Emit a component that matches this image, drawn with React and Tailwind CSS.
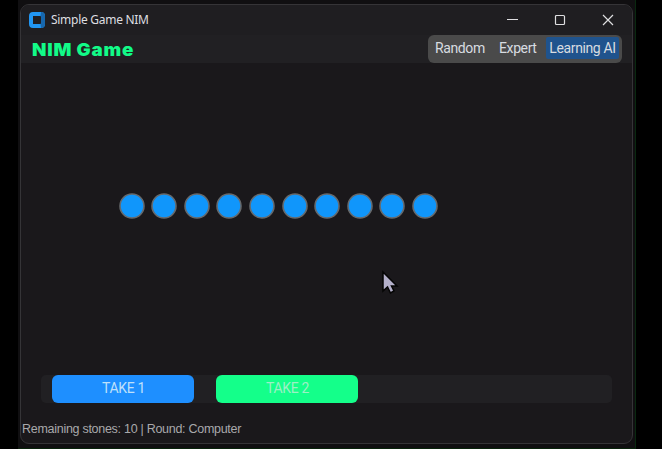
import React from 'react';

const STONES = 10;

function AppIcon() {
  return (
    <svg className="h-4 w-4 shrink-0" viewBox="0 0 16 16">
      <rect x="2" y="2" width="12" height="12" rx="2" fill="none" stroke="#2196f3" strokeWidth="4" />
      <path d="M12 0Q16 0 16 4V12Q16 16 12 16L11.5 12L12 11V5L11.5 4Z" fill="#1767ad" />
    </svg>
  );
}

function TitleBar() {
  return (
    <div className="flex h-[30px] items-center bg-[#1f1e21] pl-[8px]">
      <AppIcon />
      <span className="ml-[6px] whitespace-nowrap font-['Noto_Sans',sans-serif] text-[12px] leading-[18px] tracking-[-0.28px] text-[#dedee0]">
        Simple Game NIM
      </span>
      <div className="ml-auto mr-[18px] flex items-center gap-[36px] text-[#dedee0]">
        <svg className="h-3 w-3" viewBox="0 0 12 12" stroke="currentColor" fill="none"><path d="M1 5.5H12" /></svg>
        <svg className="h-3 w-3" viewBox="0 0 12 12" stroke="currentColor" strokeWidth="1.2" fill="none"><rect x="1.5" y="1.5" width="9" height="9" rx="1" /></svg>
        <svg className="h-3 w-3" viewBox="0 0 12 12" stroke="currentColor" strokeWidth="1.2" fill="none"><path d="M1 1L11 11M11 1L1 11" /></svg>
      </div>
    </div>
  );
}

function Header() {
  return (
    <div className="flex h-7 items-center bg-[#212023] pl-[11px] pr-[10px]">
      <h1 className="origin-left scale-x-[1.04] whitespace-nowrap pt-px font-['Inter',sans-serif] text-[18px] leading-7 font-black tracking-[0.75px] text-[#12fb88]">
        NIM Game
      </h1>
      <div className="ml-auto flex h-7 w-[194px] items-center rounded-[6px] bg-[#4a4a4a] pl-[7px] pr-[3px] pb-[2px] font-['Roboto',sans-serif] text-[14px] leading-[22px] tracking-[-0.38px] text-[#d8dce0]">
        <span className="w-[64px] whitespace-nowrap">Random</span>
        <span className="w-[47px] whitespace-nowrap">Expert</span>
        <span className="flex h-[22px] w-[73px] items-center justify-center whitespace-nowrap rounded-[2px] bg-[#1f538d]">Learning AI</span>
      </div>
    </div>
  );
}

export default function App() {
  return (
    <div className="flex h-[449px] w-[662px] overflow-hidden bg-black pl-[18px]">
      <div className="h-[449px] w-[618px] border-b border-r border-b-[#09230b] border-r-[#09280f] bg-[#100f11] pl-[2px] pt-[4px]">
        <div className="flex h-[440px] w-[613px] flex-col overflow-hidden rounded-[9px] border border-[#353437] bg-[#1a181b]">
          <TitleBar />
          <Header />
          <div className="flex h-[312px] gap-[6.6px] pl-[97.6px] pt-[130.4px]">
            {Array.from({ length: STONES }, (_, i) => (
              <svg key={i} className="h-[26px] w-[26px] shrink-0" viewBox="0 0 26 26">
                <circle cx="13" cy="13" r="12" fill="#1096fb" stroke="#66696c" strokeWidth="1.6" />
              </svg>
            ))}
          </div>
          <div className="ml-[20px] flex h-7 w-[571px] gap-[22px] rounded-[5px] bg-[#212023] pl-[11px] font-['Roboto',sans-serif] text-[14px] leading-[26px] tracking-[-0.3px]">
            <button className="h-7 w-[142px] rounded-[6px] bg-[#1e8fff] pb-[2px] pl-px text-[#bfe0fa]">TAKE 1</button>
            <button className="h-7 w-[142px] rounded-[6px] bg-[#14ff8a] pb-[2px] pl-px text-[#9cf0c6]">TAKE 2</button>
          </div>
          <p className="mt-[17px] whitespace-nowrap pl-px font-['Liberation_Sans',sans-serif] text-[12.5px] leading-[18px] tracking-[-0.28px] text-[#a9a9ab]">
            Remaining stones: 10 | Round: Computer
          </p>
        </div>
      </div>
      <svg className="absolute left-[381px] top-[269px] h-[26px] w-[18px]" viewBox="0 0 18 26">
        <path d="M2 3V22L6.5 18L9.5 24L13 22L10.5 17H16Z" fill="#b4b0ca" stroke="#050505" strokeWidth="1.5" />
      </svg>
    </div>
  );
}
